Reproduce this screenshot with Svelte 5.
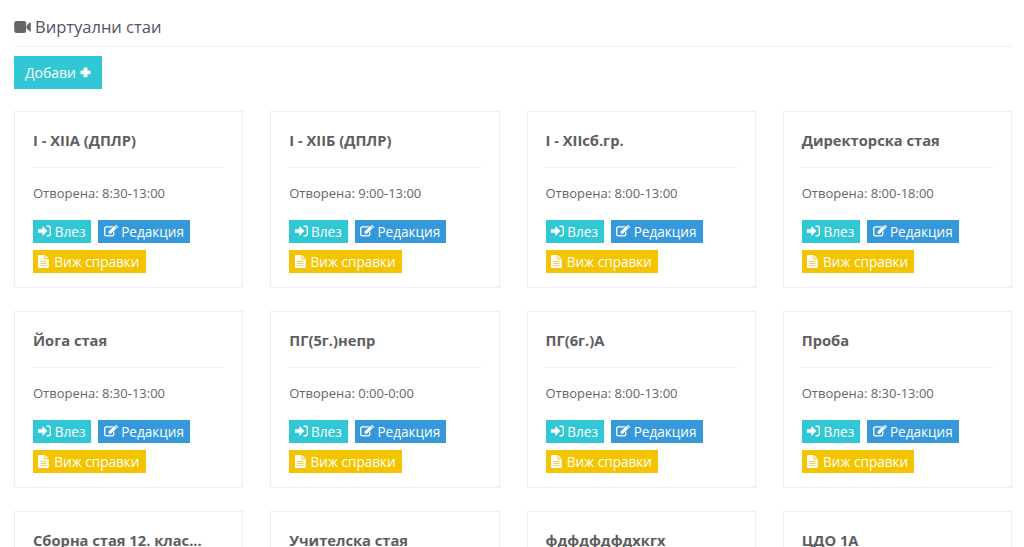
<script>
const rooms = [
  { name: "I - XIIА (ДПЛР)", hours: "8:30-13:00" },
  { name: "I - XIIБ (ДПЛР)", hours: "9:00-13:00" },
  { name: "I - XIIсб.гр.", hours: "8:00-13:00" },
  { name: "Директорска стая", hours: "8:00-18:00" },
  { name: "Йога стая", hours: "8:30-13:00" },
  { name: "ПГ(5г.)непр", hours: "0:00-0:00" },
  { name: "ПГ(6г.)А", hours: "8:00-13:00" },
  { name: "Проба", hours: "8:30-13:00" },
  { name: "Сборна стая 12. клас 2020", hours: "8:00-13:00" },
  { name: "Учителска стая", hours: "8:00-13:00" },
  { name: "фдфдфдфдхкгх", hours: "8:00-13:00" },
  { name: "ЦДО 1А", hours: "8:00-13:00" }
];

function shorten(name) {
  return name.length > 20 ? name.slice(0, 20) + "..." : name;
}
</script>

<main>
  <h1>
    <svg class="cam" viewBox="0 0 18 13" width="17" height="12">
      <path d="M2.5 0h8a2.5 2.5 0 0 1 2.5 2.5v8a2.5 2.5 0 0 1-2.5 2.5h-8a2.5 2.5 0 0 1-2.5-2.5v-8a2.5 2.5 0 0 1 2.5-2.5zM13.6 4.8l3.3-3.2c.5-.4 1.1-.1 1.1.5v8.8c0 .6-.6.9-1.1.5l-3.3-3.2z" />
    </svg>
    Виртуални стаи
  </h1>

  <button class="btn add">
    Добави
    <svg viewBox="0 0 12 12" width="11" height="11">
      <path d="M4.4 0.6h3.2a.5.5 0 0 1 .5.5v2.8h2.8a.5.5 0 0 1 .5.5v3.2a.5.5 0 0 1-.5.5h-2.8v2.8a.5.5 0 0 1-.5.5h-3.2a.5.5 0 0 1-.5-.5v-2.8h-2.8a.5.5 0 0 1-.5-.5v-3.2a.5.5 0 0 1 .5-.5h2.8v-2.8a.5.5 0 0 1 .5-.5z" transform="translate(0 -.1)" />
    </svg>
  </button>

  <div class="grid">
    {#each rooms as room}
      <section class="card">
        <h2>{shorten(room.name)}</h2>
        <p>Отворена: {room.hours}</p>
        <div class="actions">
          <button class="btn small teal">
            <svg viewBox="0 0 13 12" width="13" height="12">
              <path d="M0 4.2h4.4v-3.2l5 5-5 5v-3.2h-4.4zM8.6 .6h2a2.4 2.4 0 0 1 2.4 2.4v6a2.4 2.4 0 0 1-2.4 2.4h-2v-1.3h1.8a1.2 1.2 0 0 0 1.2-1.2v-5.8a1.2 1.2 0 0 0-1.2-1.2h-1.8z" />
            </svg>
            Влез
          </button>
          <button class="btn small blue">
            <svg viewBox="0 0 14 12" width="14" height="12">
              <path d="M2.4 1.2h6.8l-1.3 1.3h-5.5a1 1 0 0 0-1 1v5.7a1 1 0 0 0 1 1h5.7a1 1 0 0 0 1-1v-2l1.3-1.3v3.4a2.3 2.3 0 0 1-2.3 2.2h-5.7a2.4 2.4 0 0 1-2.4-2.3v-5.7a2.4 2.4 0 0 1 2.4-2.3z" />
              <path d="M4.6 6.4l5.7-5.7 2.4 2.4-5.7 5.7h-2.4zM11 0l.5-.2a.7.7 0 0 1 .8.2l1.5 1.5a.7.7 0 0 1 0 .9l-.5.5z" />
            </svg>
            Редакция
          </button>
          <button class="btn small yellow">
            <svg class="doc" viewBox="0 0 11 13" width="11" height="13">
              <path d="M.8 0h5.6v4.2h4.4v8a.8.8 0 0 1-.8.8h-9.2a.8.8 0 0 1-.8-.8v-11.4a.8.8 0 0 1 .8-.8zM7.2.2l3.5 3h-3.5zM2.6 6.3v.7h5.8v-.7zM2.6 8.2v.7h5.8v-.7zM2.6 10.1v.7h5.8v-.7z" fill-rule="evenodd" />
            </svg>
            Виж справки
          </button>
        </div>
      </section>
    {/each}
  </div>
</main>

<style>
  :global(body) {
    background: #fff;
    font-family: "Open Sans", sans-serif;
    color: #666;
    overflow: hidden;
  }

  main {
    height: 547px;
    overflow: hidden;
    padding: 14px 12px 0 14px;
    box-sizing: border-box;
  }

  h1 {
    margin: 0 1px 0 0;
    height: 26px;
    padding-bottom: 6px;
    border-bottom: 1px solid #eceff3;
    font-size: 16.5px;
    line-height: 26px;
    font-weight: 400;
    color: #4f5565;
    display: flex;
    align-items: center;
    gap: 4px;
  }

  .cam {
    fill: #666;
  }

  .btn {
    border: 0;
    border-radius: 0;
    color: #fff;
    font-family: inherit;
    display: inline-flex;
    align-items: center;
    padding: 0;
  }

  .btn svg {
    fill: #fff;
  }

  .add {
    margin-top: 9px;
    width: 88px;
    height: 33px;
    padding-bottom: 1px;
    justify-content: center;
    gap: 4px;
    background: #31c7d5;
    font-size: 14px;
  }

  .grid {
    margin-top: 22px;
    display: grid;
    grid-template-columns: repeat(4, 1fr);
    column-gap: 27px;
    row-gap: 23px;
  }

  .card {
    border: 1px solid #ebeff5;
    padding: 17px 18px 14px;
    height: 177px;
    box-sizing: border-box;
  }

  h2 {
    margin: 0;
    font-size: 14.7px;
    line-height: 22px;
    font-weight: 700;
    color: #5e5e5e;
    padding-bottom: 16px;
    border-bottom: 1px solid #eff1f4;
    white-space: nowrap;
  }

  p {
    margin: 0;
    padding-top: 15px;
    font-size: 13px;
    line-height: 20px;
    color: #666;
  }

  .actions {
    margin-top: 17px;
    display: flex;
    flex-wrap: wrap;
    gap: 7px;
  }

  .small {
    height: 23px;
    padding: 0 6px 1px 5.3px;
    gap: 3.4px;
    font-size: 13.6px;
  }

  .doc {
    margin-right: 1.6px;
  }

  .teal {
    background: #31c7d5;
  }

  .blue {
    background: #3498db;
  }

  .yellow {
    background: #f5c400;
  }
</style>
